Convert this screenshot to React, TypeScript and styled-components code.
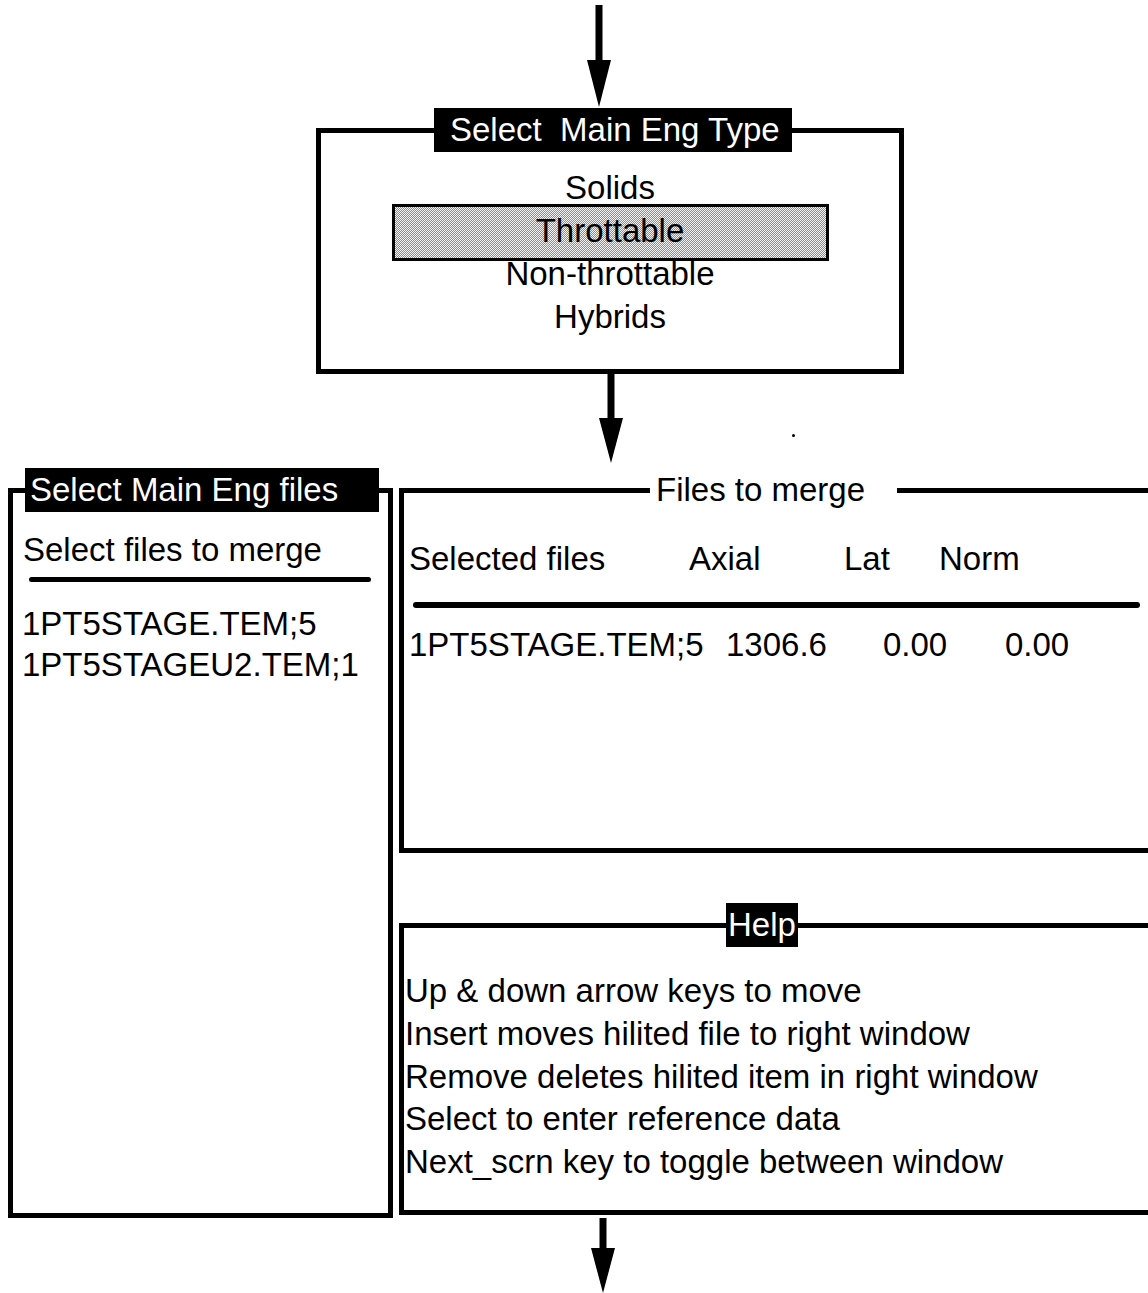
import { FC } from 'react';
import styled, { createGlobalStyle } from 'styled-components';

const GlobalStyle = createGlobalStyle`
  *, *::before, *::after {
    box-sizing: border-box;
  }
  html, body {
    margin: 0;
    padding: 0;
    background: #fff;
    overflow: hidden;
  }
  body {
    font-family: "Liberation Sans", Arial, Helvetica, sans-serif;
    font-size: 33px;
    color: #000;
  }
`;

const Page = styled.div({
  width: 1148,
  height: 1293,
  overflow: 'hidden',
  display: 'flex',
  flexDirection: 'column',
});

const ArrowRow = styled.div<{ $left: number; $height: number }>(
  ({ $left, $height }) => `
  display: flex;
  align-items: flex-start;
  height: ${$height}px;
  padding-left: ${$left}px;
  flex-shrink: 0;
`
);

const Dot = styled.span({
  width: 3,
  height: 3,
  borderRadius: '50%',
  background: '#000',
  marginLeft: 169,
  marginTop: 60,
});

const Arrow: FC<{ shaftTop: number; headTop: number; headBottom: number }> = ({
  shaftTop,
  headTop,
  headBottom,
}) => (
  <svg width="24" height={headBottom + 1} viewBox={`0 0 24 ${headBottom + 1}`}>
    <rect x="8.5" y={shaftTop} width="7" height={headTop - shaftTop + 1} fill="#000" />
    <polygon points={`0,${headTop} 24,${headTop} 12,${headBottom}`} fill="#000" />
  </svg>
);

// legend offsets are measured from the fieldset's content edge (after padding)
const Frame = styled.fieldset<{ $width: number }>(
  ({ $width }) => `
  margin: 0;
  padding: 0;
  min-width: 0;
  width: ${$width}px;
  flex-shrink: 0;
  border: 5px solid #000;
  display: flex;
  flex-direction: column;
`
);

const Title = styled.legend<{ $offset: number; $dark?: boolean; $pad: string }>(
  ({ $offset, $dark, $pad }) => `
  margin-left: ${$offset}px;
  padding: ${$pad};
  height: 44px;
  line-height: 44px;
  white-space: pre;
  background: ${$dark ? '#000' : '#fff'};
  color: ${$dark ? '#fff' : '#000'};
`
);

const TypeFrame = styled(Frame)({
  marginLeft: 316,
  paddingTop: 14,
  paddingBottom: 31,
});

const OptionList = styled.div({
  display: 'flex',
  flexDirection: 'column',
  alignItems: 'center',
});

const Option = styled.div<{ $selected?: boolean }>(
  ({ $selected }) => `
  width: 437px;
  text-align: center;
  line-height: 43px;
  ${
    $selected
      ? `
    border: 3px solid #000;
    margin: -5px 0 -9px;
    line-height: 48px;
    padding-bottom: 3px;
    background: repeating-conic-gradient(#8c8c8c 0 25%, #f4f4f4 0 50%) 0 0 / 2px 2px;
  `
      : ''
  }
`
);

const BottomRow = styled.div({
  display: 'flex',
  alignItems: 'flex-start',
  paddingLeft: 8,
  gap: 6,
  flexShrink: 0,
});

const FilesFrame = styled(Frame)({
  height: 750,
  padding: '16px 0 0 10px',
});

const Heading = styled.div({
  lineHeight: '43px',
});

const Rule = styled.div<{ $thick: number; $inset: string }>(
  ({ $thick, $inset }) => `
  height: ${$thick}px;
  margin: ${$inset};
  background: #000;
  border-radius: ${$thick / 2}px;
`
);

const FileList = styled.div({
  lineHeight: '41px',
  marginTop: 21,
  marginLeft: -1,
});

const RightColumn = styled.div({
  display: 'flex',
  flexDirection: 'column',
  flexShrink: 0,
  gap: 50,
});

const MergeFrame = styled(Frame)({
  height: 385,
  padding: '25px 0 0 5px',
});

const TableRow = styled.div({
  display: 'flex',
  lineHeight: '43px',
  whiteSpace: 'pre',
});

const Cell = styled.span<{ $w?: number }>(
  ({ $w }) => `
  ${$w ? `width: ${$w}px;` : ''}
  flex-shrink: 0;
`
);

const HelpFrame = styled(Frame)({
  height: 312,
  padding: '23px 0 0 1px',
});

const HelpLine = styled.div({
  lineHeight: '42.75px',
  whiteSpace: 'nowrap',
});

const options = ['Solids', 'Throttable', 'Non-throttable', 'Hybrids'];

const helpLines = [
  'Up & down arrow keys to move',
  'Insert moves hilited file to right window',
  'Remove deletes hilited item in right window',
  'Select to enter reference data',
  'Next_scrn key to toggle between window',
];

const App: FC = () => {
  return (
    <>
      <GlobalStyle />
      <Page>
        <ArrowRow $left={587} $height={108}>
          <Arrow shaftTop={5} headTop={60} headBottom={107} />
        </ArrowRow>

        <TypeFrame $width={588}>
          <Title $offset={113} $dark $pad="0 12px 0 16px">
            {'Select  Main Eng Type'}
          </Title>
          <OptionList>
            {options.map((o) => (
              <Option key={o} $selected={o === 'Throttable'}>
                {o}
              </Option>
            ))}
          </OptionList>
        </TypeFrame>

        <ArrowRow $left={599} $height={94}>
          <Arrow shaftTop={0} headTop={44} headBottom={89} />
          <Dot />
        </ArrowRow>

        <BottomRow>
          <FilesFrame $width={385}>
            <Title $offset={2} $dark $pad="0 41px 0 5px">
              Select Main Eng files
            </Title>
            <Heading>Select files to merge</Heading>
            <Rule $thick={5} $inset="6px 17px 0 6px" />
            <FileList>
              <div>1PT5STAGE.TEM;5</div>
              <div>1PT5STAGEU2.TEM;1</div>
            </FileList>
          </FilesFrame>

          <RightColumn>
            <MergeFrame $width={760}>
              <Title $offset={241} $pad="0 32px 0 6px">
                Files to merge
              </Title>
              <TableRow>
                <Cell $w={280}>Selected files</Cell>
                <Cell $w={155}>Axial</Cell>
                <Cell $w={95}>Lat</Cell>
                <Cell>Norm</Cell>
              </TableRow>
              <Rule $thick={6} $inset="22px 14px 15px 4px" />
              <TableRow>
                <Cell $w={317}>1PT5STAGE.TEM;5</Cell>
                <Cell $w={157}>1306.6</Cell>
                <Cell $w={122}>0.00</Cell>
                <Cell>0.00</Cell>
              </TableRow>
            </MergeFrame>

            <HelpFrame $width={760}>
              <Title $offset={321} $dark $pad="0 2px">
                Help
              </Title>
              {helpLines.map((l) => (
                <HelpLine key={l}>{l}</HelpLine>
              ))}
            </HelpFrame>
          </RightColumn>
        </BottomRow>

        <ArrowRow $left={591} $height={76}>
          <Arrow shaftTop={0} headTop={30} headBottom={75} />
        </ArrowRow>
      </Page>
    </>
  );
};

export default App;
